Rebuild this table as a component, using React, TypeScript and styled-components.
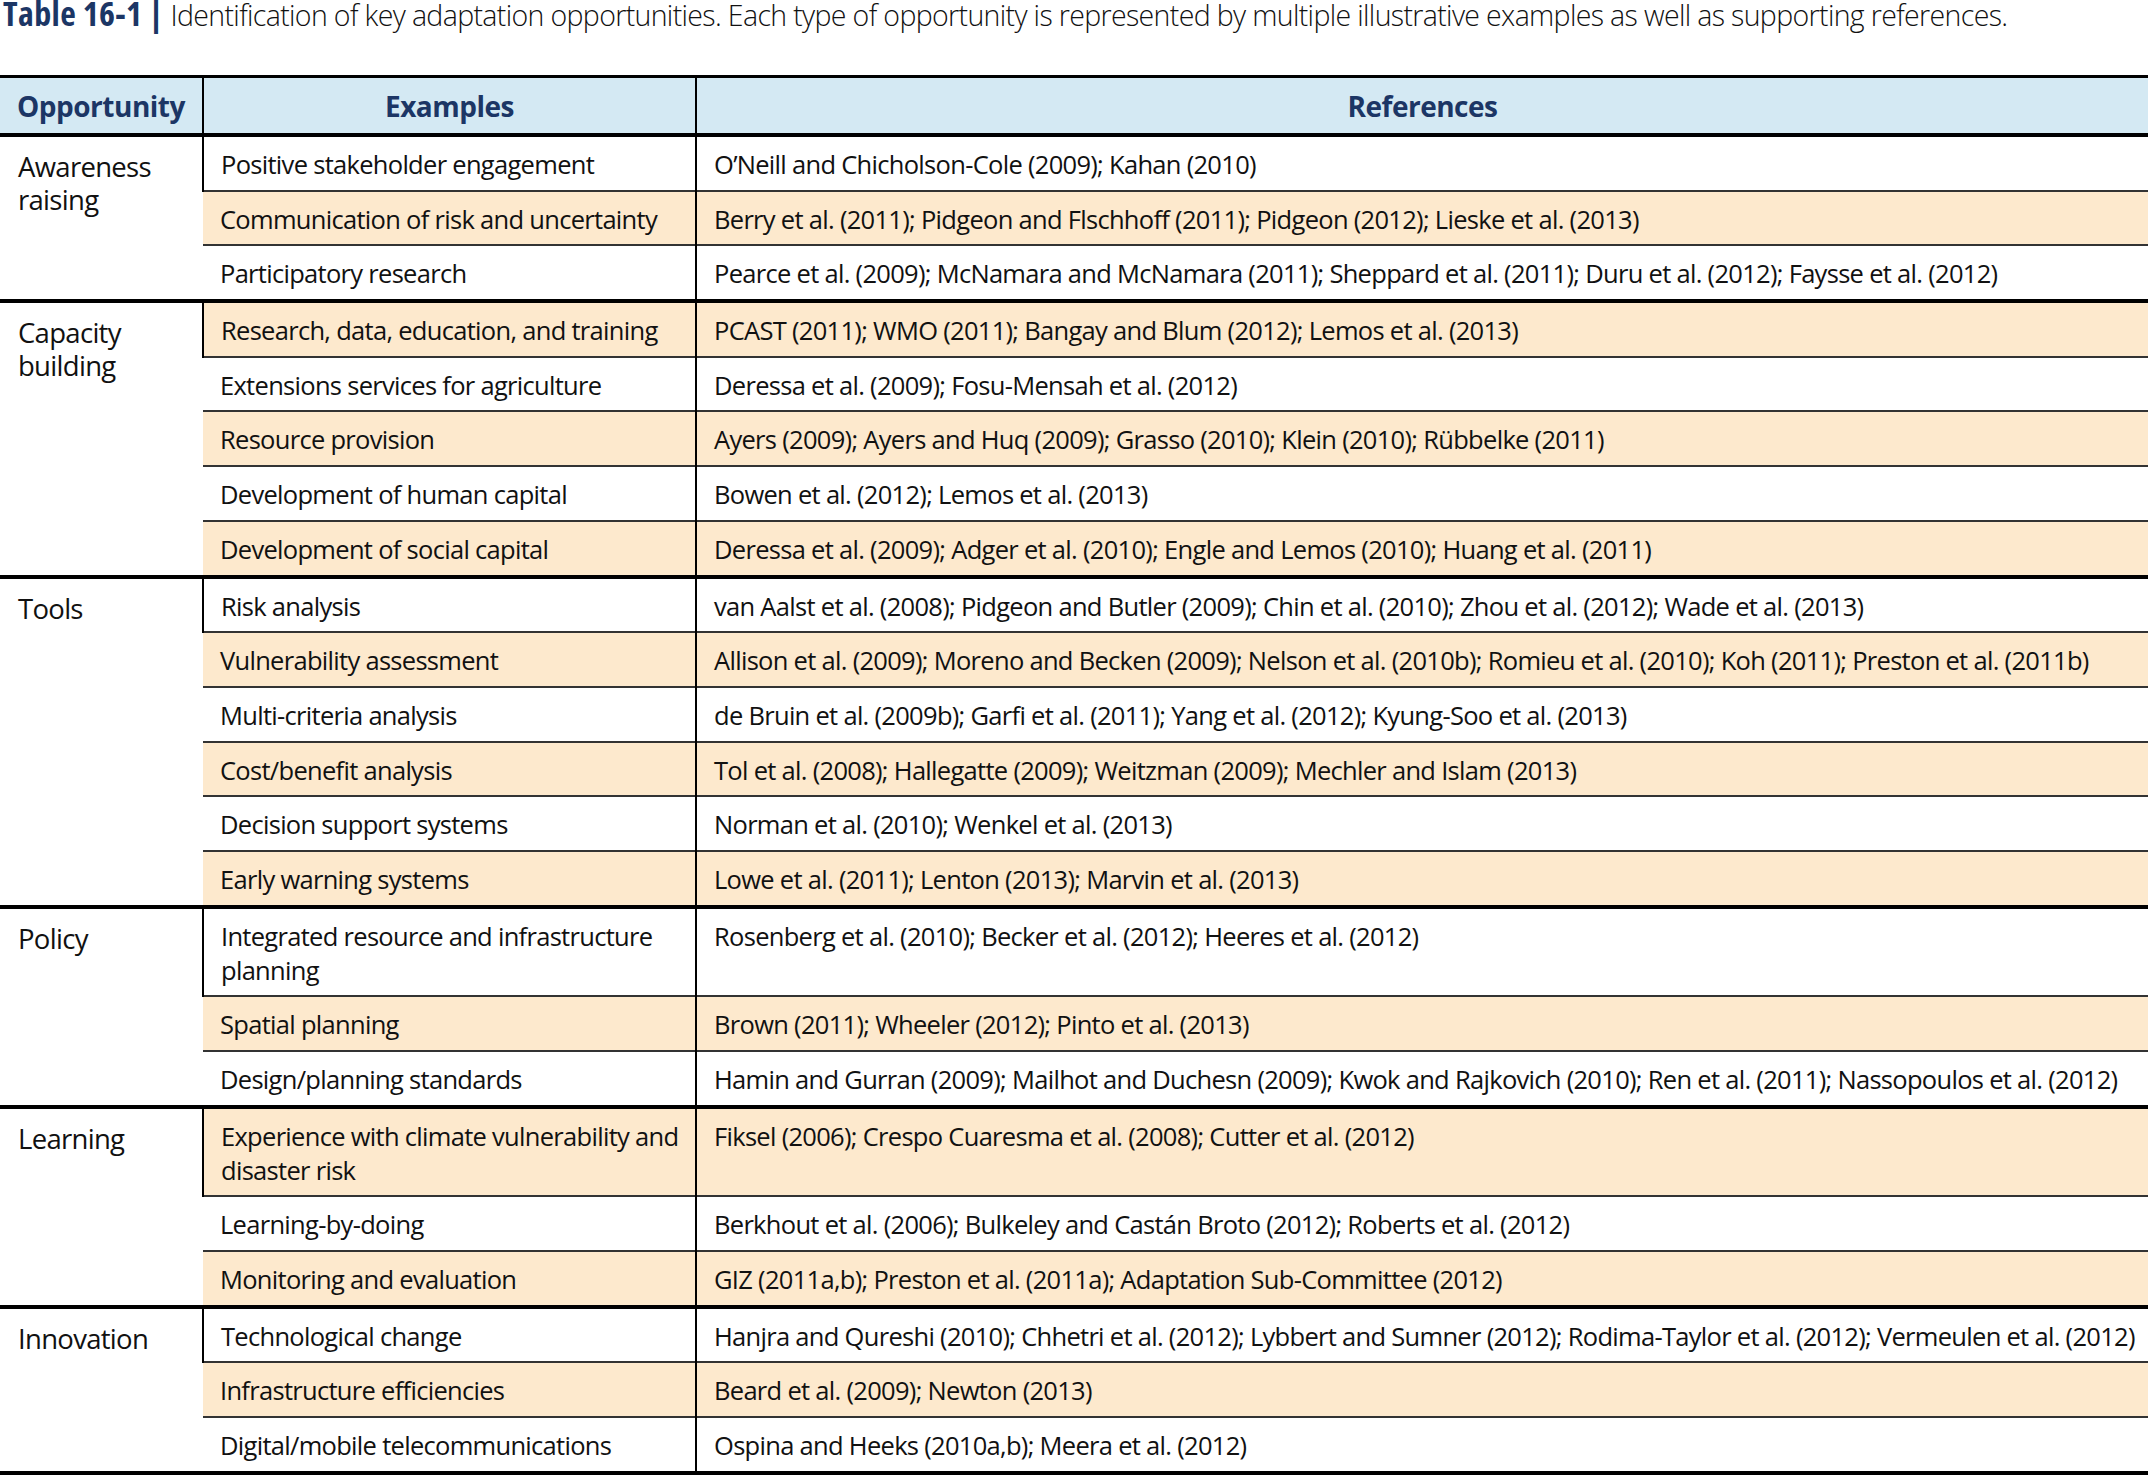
import React from "react";
import styled, { createGlobalStyle } from "styled-components";

const GlobalStyle = createGlobalStyle`
  body {
    margin: 0;
    background: #ffffff;
  }
`;

const NARROW = `"Open Sans", "Liberation Sans", sans-serif`;

interface Group {
  name: string;
  rows: [string, string][];
}

const groups: Group[] = [
  {
    name: "Awareness raising",
    rows: [
      ["Positive stakeholder engagement", "O’Neill and Chicholson-Cole (2009); Kahan (2010)"],
      ["Communication of risk and uncertainty", "Berry et al. (2011); Pidgeon and Flschhoff (2011); Pidgeon (2012); Lieske et al. (2013)"],
      ["Participatory research", "Pearce et al. (2009); McNamara and McNamara (2011); Sheppard et al. (2011); Duru et al. (2012); Faysse et al. (2012)"]
    ]
  },
  {
    name: "Capacity building",
    rows: [
      ["Research, data, education, and training", "PCAST (2011); WMO (2011); Bangay and Blum (2012); Lemos et al. (2013)"],
      ["Extensions services for agriculture", "Deressa et al. (2009); Fosu-Mensah et al. (2012)"],
      ["Resource provision", "Ayers (2009); Ayers and Huq (2009); Grasso (2010); Klein (2010); Rübbelke (2011)"],
      ["Development of human capital", "Bowen et al. (2012); Lemos et al. (2013)"],
      ["Development of social capital", "Deressa et al. (2009); Adger et al. (2010); Engle and Lemos (2010); Huang et al. (2011)"]
    ]
  },
  {
    name: "Tools",
    rows: [
      ["Risk analysis", "van Aalst et al. (2008); Pidgeon and Butler (2009); Chin et al. (2010); Zhou et al. (2012); Wade et al. (2013)"],
      ["Vulnerability assessment", "Allison et al. (2009); Moreno and Becken (2009); Nelson et al. (2010b); Romieu et al. (2010); Koh (2011); Preston et al. (2011b)"],
      ["Multi-criteria analysis", "de Bruin et al. (2009b); Garfi et al. (2011); Yang et al. (2012); Kyung-Soo et al. (2013)"],
      ["Cost/benefit analysis", "Tol et al. (2008); Hallegatte (2009); Weitzman (2009); Mechler and Islam (2013)"],
      ["Decision support systems", "Norman et al. (2010); Wenkel et al. (2013)"],
      ["Early warning systems", "Lowe et al. (2011); Lenton (2013); Marvin et al. (2013)"]
    ]
  },
  {
    name: "Policy",
    rows: [
      ["Integrated resource and infrastructure planning", "Rosenberg et al. (2010); Becker et al. (2012); Heeres et al. (2012)"],
      ["Spatial planning", "Brown (2011); Wheeler (2012); Pinto et al. (2013)"],
      ["Design/planning standards", "Hamin and Gurran (2009); Mailhot and Duchesn (2009); Kwok and Rajkovich (2010); Ren et al. (2011); Nassopoulos et al. (2012)"]
    ]
  },
  {
    name: "Learning",
    rows: [
      ["Experience with climate vulnerability and disaster risk", "Fiksel (2006); Crespo Cuaresma et al. (2008); Cutter et al. (2012)"],
      ["Learning-by-doing", "Berkhout et al. (2006); Bulkeley and Castán Broto (2012); Roberts et al. (2012)"],
      ["Monitoring and evaluation", "GIZ (2011a,b); Preston et al. (2011a); Adaptation Sub-Committee (2012)"]
    ]
  },
  {
    name: "Innovation",
    rows: [
      ["Technological change", "Hanjra and Qureshi (2010); Chhetri et al. (2012); Lybbert and Sumner (2012); Rodima-Taylor et al. (2012); Vermeulen et al. (2012)"],
      ["Infrastructure efficiencies", "Beard et al. (2009); Newton (2013)"],
      ["Digital/mobile telecommunications", "Ospina and Heeks (2010a,b); Meera et al. (2012)"]
    ]
  }
];

// Open Sans only offers condensed (75%) and semi-condensed faces here
const SEMI = "89%";

const Page = styled.div`
  width: 2148px;
  font-family: ${NARROW};
  color: #111111;
`;

const Caption = styled.div`
  font-size: 28.5px;
  font-weight: 300;
  font-stretch: ${SEMI};
  letter-spacing: -0.65px;
  line-height: 30px;
  height: 30px;
  margin-bottom: 45px;
  white-space: nowrap;
  padding-left: 3px;
`;

const CaptionLabel = styled.span`
  font-weight: bold;
  font-stretch: 75%;
  letter-spacing: 0.4px;
  line-height: 24px;
  color: #1c3665;
  font-size: 34px;
  margin-right: 7px;
`;

const Table = styled.table`
  width: 2148px;
  border-collapse: collapse;
  table-layout: fixed;
  border-top: 3px solid #000000;
  border-bottom: 4px solid #000000;
`;

const HeadCell = styled.th`
  background: #d4e9f3;
  color: #1c3665;
  font-weight: bold;
  font-stretch: ${SEMI};
  font-size: 28px;
  letter-spacing: -0.5px;
  height: 55px;
  padding: 0 8px;
  text-align: center;
  border-bottom: 4px solid #000000;
  & + & {
    border-left: 2px solid #000000;
  }
`;

const Row = styled.tr<{ $groupStart: boolean }>`
  border-top: ${({ $groupStart }) =>
    $groupStart ? "4px solid #000000" : "2px solid #333333"};
`;

const Cell = styled.td<{ $shade?: boolean; $nowrap?: boolean }>`
  background: ${({ $shade }) => ($shade ? "#fde9cd" : "#ffffff")};
  font-size: 25.5px;
  font-stretch: ${SEMI};
  letter-spacing: -0.7px;
  line-height: 34px;
  padding: 10px 8px 8.7px 17px;
  vertical-align: top;
  white-space: ${({ $nowrap }) => ($nowrap ? "nowrap" : "normal")};
  & + & {
    border-left: 2px solid #000000;
  }
`;

const GroupCell = styled(Cell)`
  font-size: 27.5px;
  line-height: 33px;
  padding: 13px 20px 9px 18px;
`;

export default function App(): JSX.Element {
  let index = 0;
  return (
    <Page>
      <GlobalStyle />
      <Caption>
        <CaptionLabel>Table 16-1 |</CaptionLabel>
        Identification of key adaptation opportunities. Each type of opportunity is represented by
        multiple illustrative examples as well as supporting references.
      </Caption>
      <Table>
        <colgroup>
          <col style={{ width: "203px" }} />
          <col style={{ width: "493px" }} />
          <col />
        </colgroup>
        <thead>
          <tr>
            <HeadCell>Opportunity</HeadCell>
            <HeadCell>Examples</HeadCell>
            <HeadCell>References</HeadCell>
          </tr>
        </thead>
        <tbody>
          {groups.map(group =>
            group.rows.map(([example, refs], i) => {
              const shade = index % 2 === 1;
              index += 1;
              return (
                <Row key={example} $groupStart={i === 0}>
                  {i === 0 && (
                    <GroupCell rowSpan={group.rows.length}>{group.name}</GroupCell>
                  )}
                  <Cell $shade={shade}>{example}</Cell>
                  <Cell $shade={shade} $nowrap>
                    {refs}
                  </Cell>
                </Row>
              );
            })
          )}
        </tbody>
      </Table>
    </Page>
  );
}
